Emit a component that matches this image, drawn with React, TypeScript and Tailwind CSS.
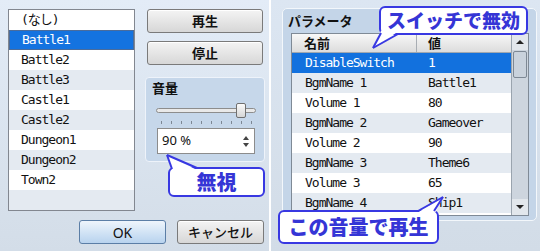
import React from "react";

const mono = { fontFamily: '"DejaVu Sans Mono", "Noto Sans CJK JP", monospace' };
const jp = { fontFamily: '"Noto Sans CJK JP", "Noto Sans", sans-serif' };

const listItems = ["(なし)", "Battle1", "Battle2", "Battle3", "Castle1", "Castle2", "Dungeon1", "Dungeon2", "Town2", ""];

const params: [string, string][] = [
  ["DisableSwitch", "1"],
  ["BgmName 1", "Battle1"],
  ["Volume 1", "80"],
  ["BgmName 2", "Gameover"],
  ["Volume 2", "90"],
  ["BgmName 3", "Theme6"],
  ["Volume 3", "65"],
  ["BgmName 4", "Ship1"],
];

function GrayButton({ children, className }: { children: React.ReactNode; className?: string }) {
  return (
    <div
      className={
        "flex items-center justify-center rounded-[3px] border border-[#7a7a7a] bg-gradient-to-b from-[#f4f4f4] to-[#d7d7d7] text-[13px] font-bold text-[#111] shadow-[inset_0_1px_0_#ffffff] " +
        (className ?? "")
      }
      style={jp}
    >
      {children}
    </div>
  );
}

export default function App() {
  return (
    <div className="flex h-[251px] w-[540px] overflow-hidden bg-white">
      {/* Left panel */}
      <div className="relative flex h-full w-[269px] flex-col bg-gradient-to-b from-[#e3ecf7] to-[#d3dde8]">
        <div className="flex pl-[8px] pt-[9px]">
          {/* list */}
          <div className="h-[202px] w-[127px] overflow-hidden border border-[#828790] bg-white">
            {listItems.map((it, i) => {
              const sel = i === 1;
              return (
                <div
                  key={i}
                  className={
                    "flex h-[20px] items-center pl-[12px] text-[13px] tracking-[-1px] " +
                    (sel
                      ? "border border-[#4a6c9c] bg-[#1473e0] pl-[11px] text-white"
                      : i % 2 === 1
                      ? "bg-[#e4eaf1] text-[#111]"
                      : "bg-white text-[#111]")
                  }
                  style={mono}
                >
                  {it}
                </div>
              );
            })}
          </div>
          {/* side column */}
          <div className="ml-[10px] flex w-[120px] flex-col">
            <GrayButton className="mx-[2px] h-[24px]">再生</GrayButton>
            <GrayButton className="mx-[2px] mt-[8px] h-[24px]">停止</GrayButton>
            <div className="mt-[12px] h-[85px] rounded-[4px] border border-[#eef3fa] bg-[#c6d7ea]">
              <div className="pl-[6px] pt-[2px] text-[13px] font-bold leading-[16px] text-[#111]" style={jp}>
                音量
              </div>
              <div className="relative ml-[10px] mt-[6px] h-[16px] w-[100px]">
                <div className="absolute left-0 top-[6px] h-[5px] w-[100px] rounded-full border border-[#8d8d8d] bg-[#e9e9e9]" />
                <div className="absolute left-[80px] top-[1px] h-[15px] w-[10px] rounded-[2px] border border-[#707070] bg-gradient-to-b from-[#fbfbfb] to-[#d6d6d6]" />
              </div>
              <div className="relative ml-[10px] mt-[3px] h-[3px] w-[100px]">
                {[0, 1, 2, 3, 4, 5, 6, 7, 8, 9].map((i) => (
                  <div
                    key={i}
                    className="absolute top-0 h-[3px] w-[1px] bg-[#7d8896]"
                    style={{ left: 5 + i * 10 }}
                  />
                ))}
              </div>
              <div className="ml-[11px] mt-[4px] flex h-[26px] w-[98px] items-center border border-[#8c8c8c] bg-white pl-[4px]">
                <span className="flex-1 text-[13px] text-[#111]" style={{ fontFamily: '"Noto Sans", sans-serif' }}>
                  90 %
                </span>
                <div className="mr-[5px] flex flex-col items-center gap-[3px]">
                  <div className="h-0 w-0 border-x-[3px] border-b-[4px] border-x-transparent border-b-[#444]" />
                  <div className="h-0 w-0 border-x-[3px] border-t-[4px] border-x-transparent border-t-[#444]" />
                </div>
              </div>
            </div>
          </div>
        </div>
        {/* bottom buttons */}
        <div className="mt-[9px] flex justify-end gap-[11px] pr-[5px]">
          <div
            className="flex h-[24px] w-[87px] items-center justify-center rounded-[3px] border border-[#5b7ea6] bg-gradient-to-b from-[#eef5fc] to-[#b8d3ee] text-[14px] text-[#111]"
            style={{ fontFamily: '"Noto Sans", sans-serif' }}
          >
            OK
          </div>
          <GrayButton className="h-[24px] w-[87px] !font-medium">キャンセル</GrayButton>
        </div>

        {/* callout 無視 */}
        <div
          className="absolute left-[168px] top-[167px] flex h-[30px] w-[97px] items-center justify-center rounded-[6px] border-2 border-[#3838e2] bg-white text-[20px] font-black text-[#3535d6]"
          style={jp}
        >
          無視
        </div>
        <svg className="pointer-events-none absolute left-0 top-0" width="269" height="251">
          <polygon points="167,155 172,170 197,170" fill="#ffffff" />
          <line x1="167" y1="155" x2="172" y2="169" stroke="#3838e2" strokeWidth="2" />
          <line x1="167" y1="155" x2="197" y2="168" stroke="#3838e2" strokeWidth="2" />
        </svg>
      </div>

      {/* divider */}
      <div className="w-[2px] bg-white" />

      {/* Right panel */}
      <div className="relative h-full flex-1 bg-gradient-to-b from-[#dce6f2] to-[#d2dce7] pl-[11px] pt-[8px]">
        <div className="h-[213px] w-[255px] rounded-[5px] border border-[#f3f7fb] bg-[#c4d5e8]">
          <div className="pl-[5px] pt-[3px] text-[13px] font-bold leading-[18px] text-[#111]" style={jp}>
            パラメータ
          </div>
          <div className="ml-[8px] mt-[3px] flex h-[183px] w-[238px] overflow-hidden border border-[#7f8a96] bg-white">
            <div className="flex w-[219px] flex-col">
              <div className="flex h-[19px] border-b border-[#a0a8b0] bg-gradient-to-b from-[#f8f8f8] to-[#dcdcdc] text-[13px] font-bold text-[#111]" style={jp}>
                <div className="flex w-[125px] items-center border-r border-[#a8adb3] pl-[12px]">名前</div>
                <div className="flex flex-1 items-center pl-[11px]">値</div>
              </div>
              {params.map(([k, v], i) => {
                const sel = i === 0;
                return (
                  <div
                    key={i}
                    className={
                      "flex h-[20px] shrink-0 items-center text-[13px] tracking-[-1px] " +
                      (sel ? "bg-[#1271de] text-white" : i % 2 === 1 ? "bg-[#e4eaf1] text-[#111]" : "bg-white text-[#111]")
                    }
                    style={mono}
                  >
                    <div className="w-[125px] pl-[13px]">{k}</div>
                    <div className="flex-1 pl-[11px]">{v}</div>
                  </div>
                );
              })}
            </div>
            {/* scrollbar */}
            <div className="flex w-[17px] flex-col border-l border-[#9aa4ae] bg-[#cdd5de]">
              <div className="flex h-[16px] items-center justify-center bg-[#e2e7ec]">
                <div className="h-0 w-0 border-x-[4px] border-b-[4px] border-x-transparent border-b-[#222]" />
              </div>
              <div className="mx-[1px] mt-[1px] h-[27px] rounded-[2px] border border-[#7d8894] bg-[#c9d2dc]" />
              <div className="flex-1" />
              <div className="flex h-[16px] items-center justify-center bg-[#e2e7ec]">
                <div className="h-0 w-0 border-x-[4px] border-t-[4px] border-x-transparent border-t-[#222]" />
              </div>
            </div>
          </div>
        </div>

        {/* callout スイッチで無効 */}
        <div
          className="absolute left-[108px] top-[6px] flex h-[29px] w-[149px] items-center justify-center rounded-[6px] border-2 border-[#3838e2] bg-white text-[19px] font-black text-[#3535d6]"
          style={jp}
        >
          スイッチで無効
        </div>
        {/* callout この音量で再生 */}
        <div
          className="absolute left-[7px] top-[210px] flex h-[34px] w-[161px] items-center justify-center rounded-[6px] border-2 border-[#3838e2] bg-white text-[20px] font-black text-[#3535d6]"
          style={jp}
        >
          この音量で再生
        </div>
        <svg className="pointer-events-none absolute left-0 top-0" width="269" height="251">
          <polygon points="102,48 110,31 128,31" fill="#ffffff" />
          <line x1="102" y1="48" x2="110" y2="33" stroke="#3838e2" strokeWidth="2" />
          <line x1="102" y1="48" x2="127" y2="34" stroke="#3838e2" strokeWidth="2" />
          <polygon points="172,197 146,213 164,213" fill="#ffffff" />
          <line x1="172" y1="197" x2="147" y2="211" stroke="#3838e2" strokeWidth="2" />
          <line x1="172" y1="197" x2="163" y2="211" stroke="#3838e2" strokeWidth="2" />
        </svg>
      </div>
    </div>
  );
}
